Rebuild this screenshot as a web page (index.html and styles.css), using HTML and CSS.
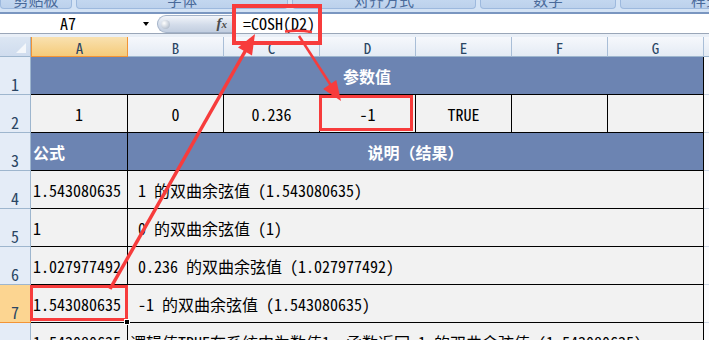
FILE: index.html
```html
<!DOCTYPE html>
<html lang="zh-CN">
<head>
<meta charset="UTF-8">
<meta name="viewport" content="width=device-width, initial-scale=1.0">
<title>COSH 函数</title>
<link rel="stylesheet" href="styles.css">
</head>
<body>
    <!-- ribbon groups, only their lower edge is on screen -->
    <div class="ribbon">
        <div class="group g1"><span>剪贴板</span></div>
        <div class="group g2"><span>字体</span></div>
        <div class="group g3"><span>对齐方式</span></div>
        <div class="group g4"><span>数字</span></div>
        <div class="group g5"><span>样式</span></div>
    </div>

    <div class="formula-bar">
        <div class="namebox">A7</div>
        <div class="drop"></div>
        <div class="fxbox"><span class="knob"></span><span class="fx">f<i>x</i></span></div>
        <div class="formula">=COSH(D2)</div>
    </div>
    <div class="strip"></div>

    <div class="sheet">
        <div class="corner"></div>
        <div class="ch on">A</div>
        <div class="ch">B</div>
        <div class="ch">C</div>
        <div class="ch">D</div>
        <div class="ch">E</div>
        <div class="ch">F</div>
        <div class="ch">G</div>
        <div class="ch rest"></div>

        <div class="rh">1</div>
        <div class="c head mid span7">参数值</div>
        <div class="x"></div>

        <div class="rh">2</div>
        <div class="c mid">1</div>
        <div class="c mid">0</div>
        <div class="c mid">0.236</div>
        <div class="c mid">-1</div>
        <div class="c mid">TRUE</div>
        <div class="c"></div>
        <div class="c"></div>
        <div class="x"></div>

        <div class="rh">3</div>
        <div class="c head">公式</div>
        <div class="c head mid span6">说明（结果）</div>
        <div class="x"></div>

        <div class="rh">4</div>
        <div class="c">1.543080635</div>
        <div class="c span6"> 1 的双曲余弦值 (1.543080635)</div>
        <div class="x"></div>

        <div class="rh">5</div>
        <div class="c">1</div>
        <div class="c span6"> 0 的双曲余弦值 (1)</div>
        <div class="x"></div>

        <div class="rh">6</div>
        <div class="c">1.027977492</div>
        <div class="c span6"> 0.236 的双曲余弦值 (1.027977492)</div>
        <div class="x"></div>

        <div class="rh on">7</div>
        <div class="c">1.543080635</div>
        <div class="c span6"> -1 的双曲余弦值 (1.543080635)</div>
        <div class="x"></div>

        <div class="rh">8</div>
        <div class="c">1.543080635</div>
        <div class="c span6">逻辑值TRUE在系统中为数值1，函数返回 1 的双曲余弦值 (1.543080635)</div>
        <div class="x"></div>
    </div>

    <!-- red marks drawn over the sheet -->
    <svg class="marks" width="709" height="340" viewBox="0 0 709 340">
        <g fill="none" stroke="#f73c3c">
            <rect x="234" y="6" width="86" height="37" stroke-width="4"/>
            <rect x="320.5" y="96.5" width="91" height="33" stroke-width="3"/>
            <rect x="31.5" y="286.5" width="95" height="33" stroke-width="3"/>
            <path d="M285 31.5 Q298 30 312 32" stroke-width="2.5"/>
            <line x1="110" y1="289" x2="247" y2="48" stroke-width="3.5"/>
            <line x1="299" y1="36" x2="332" y2="87" stroke-width="2.5"/>
        </g>
        <g fill="#f73c3c">
            <polygon points="255,34 252,55.4 238,47.4"/>
            <polygon points="341,101 336.3,80 323.1,89"/>
        </g>
        <rect x="124.5" y="319.5" width="5" height="5" fill="#000" stroke="#fff" stroke-width="1"/>
    </svg>
</body>
</html>
```

FILE: styles.css
```css
body {
    margin: 0;
    width: 709px;
    height: 340px;
    overflow: hidden;
    position: relative;
    background-color: #fff;
    font-family: "Noto Sans Mono CJK SC", "Liberation Mono", "Noto Sans CJK SC", monospace;
    font-size: 16px;
    color: #000;
}

/* ribbon */
.ribbon {
    display: flex;
    gap: 4px;
    height: 12px;
    background-color: #d4e3f5;
    border-bottom: 2px solid #7a96c0;
}

.group {
    box-sizing: border-box;
    height: 9px;
    flex: none;
    display: flex;
    justify-content: center;
    align-items: flex-end;
    overflow: hidden;
    background: linear-gradient(#c3d7f0, #bcd1ec);
    border: 1px solid #9db9de;
    border-top: none;
    border-radius: 0 0 4px 4px;
}

.group span {
    font-family: "Noto Sans CJK SC", sans-serif;
    font-size: 15px;
    line-height: 15px;
    margin-bottom: 1px;
    color: #4a6a9a;
    flex: none;
}

.g1 { width: 72px; }
.g2 { width: 212px; }
.g3 { width: 184px; }
.g4 { width: 136px; }
.g5 { width: 172px; }

/* formula bar */
.formula-bar {
    display: flex;
    height: 19px;
    border-bottom: 1px solid #9aa6b8;
    background-color: #fff;
}

.namebox {
    width: 136px;
    text-align: center;
    line-height: 19px;
}

.drop {
    width: 21px;
    position: relative;
}

.drop::after {
    content: "";
    position: absolute;
    left: 7px;
    top: 8px;
    border-left: 3.5px solid transparent;
    border-right: 3.5px solid transparent;
    border-top: 4px solid #000;
}

.fxbox {
    box-sizing: border-box;
    width: 76px;
    height: 18px;
    margin-top: 1px;
    display: flex;
    align-items: center;
    justify-content: space-between;
    padding: 0 6px 0 3px;
    background: linear-gradient(#f2f5fa, #d3dcea 55%, #c2cee0);
    border: 1px solid #a4b3c9;
    border-right: none;
    border-radius: 9px 0 0 9px;
}

.knob {
    width: 9px;
    height: 9px;
    border-radius: 50%;
    background: radial-gradient(circle at 35% 35%, #ffffff, #b9c3d1 70%, #9aa7b9);
}

.fx {
    font-family: "Liberation Serif", serif;
    font-style: italic;
    font-weight: bold;
    font-size: 15px;
    color: #4b4b4b;
    line-height: 15px;
}

.fx i {
    font-size: 11px;
}

.formula {
    flex: 1;
    padding-left: 10px;
    line-height: 19px;
}

.strip {
    height: 3px;
    background-color: #e9eff7;
}

/* sheet */
.sheet {
    display: grid;
    grid-template-columns: 31px 97px repeat(6, 96px) 1fr;
    grid-template-rows: 20px repeat(8, 38px);
}

.sheet > div {
    box-sizing: border-box;
    min-width: 0;
}

.corner {
    position: relative;
    background: linear-gradient(#dce6f3, #cfdcee);
    border-right: 1px solid #9eb6ce;
    border-bottom: 1px solid #9eb6ce;
}

.corner::after {
    content: "";
    position: absolute;
    right: 4px;
    bottom: 3px;
    border-left: 10px solid transparent;
    border-bottom: 10px solid #f4f7fb;
}

.ch {
    display: flex;
    justify-content: center;
    align-items: center;
    padding-top: 2px;
    background: linear-gradient(#f6f8fc, #e4ebf4);
    border-right: 1px solid #a9bed7;
    border-bottom: 1px solid #9eb6ce;
    color: #2a4563;
    font-size: 15px;
}

.ch.on {
    background: linear-gradient(#f9e1b0, #f5cb7a);
    border: 1px solid #f29436;
    border-top: none;
}

.ch.rest {
    border-right: none;
}

.rh {
    display: flex;
    justify-content: center;
    align-items: flex-end;
    padding-bottom: 1px;
    background-color: #e4ecf7;
    border-right: 1px solid #9eb6ce;
    border-bottom: 1px solid #9eb6ce;
    color: #2a4563;
    line-height: 18px;
}

.rh.on {
    background-color: #fcd591;
    border-right-color: #f29436;
    border-bottom-color: #f29436;
}

.c {
    display: flex;
    align-items: center;
    padding: 0 2px;
    white-space: pre;
    overflow: hidden;
    background-color: #f2f2f2;
    border-right: 1px solid #000;
    border-bottom: 1px solid #000;
}

.c.mid {
    justify-content: center;
}

.c.head {
    background-color: #6c84b2;
    color: #fff;
    font-weight: bold;
}

.span7 { grid-column: span 7; }
.span6 { grid-column: span 6; }

.x {
    background-color: #fbfcfe;
    border-bottom: 1px solid #d0d9e6;
}

/* annotation layer */
.marks {
    position: absolute;
    left: 0;
    top: 0;
    pointer-events: none;
}
```
